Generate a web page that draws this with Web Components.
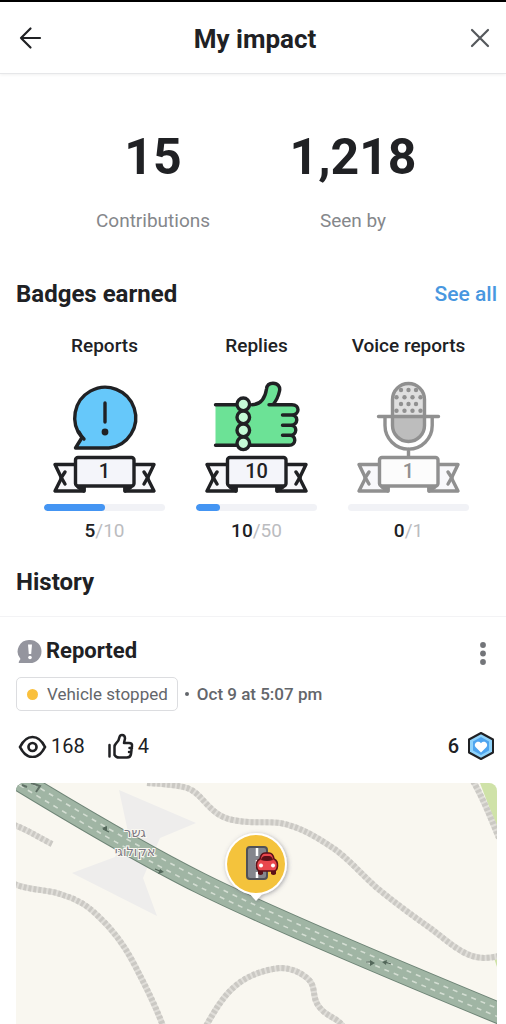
<!DOCTYPE html>
<html lang="en">
<head>
<meta charset="utf-8">
<meta name="viewport" content="width=device-width, initial-scale=1">
<title>My impact</title>
<style>
  body {
    margin: 0;
    background-color: #fff;
    color: #202124;
    font-family: Roboto, "Liberation Sans", sans-serif;
  }
</style>
</head>
<body>
<impact-page></impact-page>

<script>
class PageHeader extends HTMLElement {
  constructor() {
    super();
    this.attachShadow({ mode: "open" });
    this.shadowRoot.innerHTML = `
      <style>
        :host {
          display: block;
          border-top: 2px solid #000;
        }
        header {
          display: flex;
          align-items: center;
          justify-content: space-between;
          height: 71px;
          padding: 0 8px 0 12px;
          border-bottom: 1px solid #e6e7e9;
          box-shadow: 0 1px 3px rgba(0, 0, 0, 0.06);
        }
        h1 {
          margin: 0;
          padding-top: 2px;
          font-size: 26px;
          line-height: 32px;
          font-weight: 700;
        }
        button {
          display: flex;
          padding: 4px;
          border: none;
          background: none;
          cursor: pointer;
        }
        svg {
          width: 28px;
          height: 28px;
          fill: none;
          stroke-width: 2.2;
          stroke-linecap: round;
          stroke-linejoin: round;
        }
      </style>
      <header>
        <button type="button" aria-label="Back">
          <svg viewBox="0 0 28 28" stroke="#202124"><path d="M24 14H5M14.500 4.500 5 14l9.500 9.500"/></svg>
        </button>
        <h1><slot></slot></h1>
        <button type="button" aria-label="Close">
          <svg viewBox="0 0 28 28" stroke="#55585c"><path d="M6 6 22 22M22 6 6 22"/></svg>
        </button>
      </header>
    `;
  }
}
customElements.define("page-header", PageHeader);

class ImpactStat extends HTMLElement {
  constructor() {
    super();
    this.attachShadow({ mode: "open" });
    this.shadowRoot.innerHTML = `
      <style>
        :host {
          display: flex;
          flex-direction: column;
          align-items: center;
          gap: 24px;
        }
        .value {
          font-size: 50px;
          line-height: 56px;
          font-weight: 700;
        }
        .label {
          color: #85878b;
          font-size: 19px;
          line-height: 24px;
        }
      </style>
      <div class="value"><slot></slot></div>
      <div class="label">${this.getAttribute("label")}</div>
    `;
  }
}
customElements.define("impact-stat", ImpactStat);

// pictures that sit above the ribbon, one per badge kind
const badgeArt = {
  reports: `
    <path class="line" fill="#66c8fa" d="M65 72H31.500L38 61.500A30.500 30.500 0 1 1 65 72Z"/>
    <path class="line" fill="none" d="M35 56Q37 60 40 63M61 27V46"/>
    <circle cx="61" cy="56" r="3.400"/>`,
  replies: `
    <path fill="#6ce296" d="M19.500 28.700H50V69.300H19.500Z"/>
    <path class="line" fill="none" d="M19.500 28.700H48M19.500 69.300H48"/>
    <path fill="#6ce296" d="M48 28.700H56C64 28 69 22 70.500 13C71 9 73.500 7.300 77 7.300C82 7.300 84.500 11 83.500 15C82.500 20 80 25 77 28.700H97C104 28.700 104 39 97 39C103 39 102 49.200 97 49.200C101.500 49.200 101 59.300 96 59.300C101 59.300 100 69.300 94 69.300H48Z"/>
    <path class="line" fill="none" d="M48 69.300H93C100.500 69.300 100.500 59.300 94 59.300H86.500M94 59.300C101.500 59.300 101.500 49.200 95 49.200H86.500M95 49.200C102.500 49.200 102.500 39 96 39H86.500M96 39C104 39 104 28.700 96 28.700H73M56 28.700C64 28.500 69 23 70.500 13C71 9 73.500 7.300 77 7.300C82 7.300 84.500 11 83.500 15C82.500 20 80 25 77 28.700"/>
    <g class="line" fill="#c4fad6">
      <circle cx="47.300" cy="28.300" r="6.300"/><circle cx="47.300" cy="41.300" r="6.300"/>
      <circle cx="47.300" cy="54.300" r="6.300"/><circle cx="47.300" cy="67.300" r="6.300"/>
    </g>`,
  voice: `
    <rect x="44.500" y="7.500" width="32" height="58" rx="16" fill="#bdbdbd"/>
    <path fill="#dfdfdf" d="M44.500 40V23.500a16 16 0 0 1 32 0V40Z"/>
    <g>
      <circle cx="53" cy="14" r="2.200"/><circle cx="60.500" cy="14" r="2.200"/><circle cx="68" cy="14" r="2.200"/>
      <circle cx="48.500" cy="21.300" r="2.200"/><circle cx="56.500" cy="21.300" r="2.200"/><circle cx="64.500" cy="21.300" r="2.200"/><circle cx="72.500" cy="21.300" r="2.200"/>
      <circle cx="53" cy="28" r="2.200"/><circle cx="60.500" cy="28" r="2.200"/><circle cx="68" cy="28" r="2.200"/>
      <circle cx="48.500" cy="34.800" r="2.200"/><circle cx="56.500" cy="34.800" r="2.200"/><circle cx="64.500" cy="34.800" r="2.200"/><circle cx="72.500" cy="34.800" r="2.200"/>
    </g>
    <rect class="line" x="44.500" y="7.500" width="32" height="58" rx="16" fill="none"/>
    <path class="line" fill="none" d="M30.500 40.500H90.500M37 40.500V49.500A23.600 23.600 0 0 0 84.200 49.500V40.500M60.500 73V81"/>`
};

class ImpactBadge extends HTMLElement {
  constructor() {
    super();
    this.attachShadow({ mode: "open" });
    const level = this.getAttribute("level");
    const value = Number(this.getAttribute("value"));
    const goal = Number(this.getAttribute("goal"));
    const ink = value > 0 ? "#202124" : "#909090";
    this.shadowRoot.innerHTML = `
      <style>
        :host {
          display: flex;
          flex-direction: column;
          align-items: center;
          min-width: 0;
        }
        h3 {
          margin: 0 0 18px;
          font-size: 19px;
          line-height: 24px;
          font-weight: 500;
          white-space: nowrap;
        }
        svg {
          display: block;
          width: 121px;
          height: 120px;
          margin-bottom: 8px;
        }
        .line {
          stroke: ${ink};
          stroke-width: 3.400;
          stroke-linecap: round;
          stroke-linejoin: round;
        }
        text {
          font-size: 20px;
          font-weight: 500;
          text-anchor: middle;
        }
        .bar {
          width: 100%;
          height: 7px;
          border-radius: 4px;
          background-color: #f1f2f6;
          overflow: hidden;
        }
        .fill {
          width: ${value / goal * 100}%;
          height: 100%;
          border-radius: 4px;
          background-color: #4495f3;
        }
        .count {
          margin-top: 8px;
          color: #bbbcbf;
          font-size: 19px;
          line-height: 24px;
        }
        .count b {
          color: #202124;
          font-weight: 500;
        }
      </style>
      <h3><slot></slot></h3>
      <svg viewBox="0 0 121 120" fill="${ink}" aria-hidden="true">
        ${badgeArt[this.getAttribute("kind")]}
        <g class="line">
          <path fill="#f8f8fb" d="M32 88.500H11L17.500 102 11 115H40V110M89 88.500H110L103.500 102 110 115H81V110"/>
          <path fill="none" d="M17 102 21 96M17 101 21 108M104 102 100 96M104 101 100 108"/>
          <path d="M34 111H40V115ZM87 111H81V115Z"/>
          <rect x="31.500" y="81.500" width="58.500" height="28.500" rx="2.500" fill="${value > 0 ? "#f4f5fa" : "#fcfcfc"}"/>
        </g>
        <text x="60.500" y="102">${level}</text>
      </svg>
      <div class="bar"><div class="fill"></div></div>
      <div class="count"><b>${value}</b>/${goal}</div>
    `;
  }
}
customElements.define("impact-badge", ImpactBadge);

class ReportMap extends HTMLElement {
  constructor() {
    super();
    this.attachShadow({ mode: "open" });
    this.shadowRoot.innerHTML = `
      <style>
        :host {
          display: block;
          border-radius: 8px 8px 0 0;
          background-color: #f9f7f0;
          overflow: hidden;
        }
        svg {
          display: block;
          width: 100%;
          height: auto;
        }
        .name {
          fill: #7d7883;
          stroke: #f9f7f0;
          stroke-width: 2;
          paint-order: stroke;
          font-family: "DejaVu Sans", "Liberation Sans", sans-serif;
          font-size: 13px;
          text-anchor: middle;
        }
      </style>
      <svg viewBox="0 0 481 241" fill="none">
        <defs>
          <path id="road" d="M-12 -12C60 32 130 73 184 100S330 167 490 233"/>
          <path id="tracks" d="M131 0C150 1 161 2 171 5C187 10 193 33 217 37C235 41 250 38 264 40C285 44 302 55 317 65C332 75 345 91 361 105C378 119 397 133 414 145C425 153 436 163 447 169C460 176 470 176 483 173M-2 42C10 46 22 54 36 61M-2 101C15 108 32 106 47 112C60 116 71 122 81 132C95 145 107 160 117 179C129 202 138 219 147 243M190 243C198 229 206 215 217 205C231 192 248 187 264 185C276 185 285 190 291 195C302 204 294 215 305 226C312 234 320 234 327 243M457 -2C468 17 475 36 483 55"/>
          <filter id="shade" x="-30%" y="-30%" width="160%" height="160%">
            <feDropShadow dx="1" dy="1" stdDeviation="2" flood-color="#555566" flood-opacity="0.5"/>
          </filter>
        </defs>
        <path fill="#cfe2a8" d="M464 0H481V45ZM478 175 481 173V184Z"/>
        <path fill="#eeedec" d="M103 7 180 40 144 55 127 95 141 133 56 90 99 74 112 49Z"/>
        <use href="#tracks" stroke="#e0ded9" stroke-width="6"/>
        <use href="#tracks" stroke="#cbc9c4" stroke-width="6" stroke-dasharray="3 2"/>

        <use href="#road" stroke="#6f8577" stroke-width="22"/>
        <use href="#road" stroke="#a0b5a4" stroke-width="20"/>
        <g stroke="#d3ddd2" stroke-width="1.600" stroke-dasharray="5 5">
          <path d="M-10 -15.500C62 28.500 132 69.500 185.500 96.500S331.500 163.500 491.500 229.500"/>
          <path d="M-14 -8.500C58 35.500 128 76.500 182.500 103.500S328.500 170.500 488.500 236.500"/>
        </g>
        <g stroke="#53675a" stroke-width="1.200">
          <path d="M93 49 87 46M139 86 146 89M350 179H356M369 179 375 181"/>
        </g>
        <path fill="#53675a" d="M86 45 91 43V48ZM148 89 142 91 144 86ZM359 180 354 183V177ZM366 179 371 177 370 182Z"/>
        <path stroke="#5f7065" stroke-width="2" d="M6 2 11 4M15 0 24 3 20 9"/>

        <text class="name" x="119" y="54">גשר</text>
        <text class="name" x="119" y="73">אקולוגי</text>

        <g filter="url(#shade)">
          <path fill="#fff" d="M232 109 240 118 248 109Z"/>
          <circle cx="240" cy="81" r="31" fill="#fff"/>
        </g>
        <circle cx="240" cy="81" r="29" fill="#f4c33c"/>
        <rect x="231" y="64" width="20" height="32" rx="3" fill="#84868d" stroke="#505157" stroke-width="2"/>
        <path stroke="#fff" stroke-width="2.500" d="M241 65V73M241 77V84M241 89V95"/>
        <path fill="#5c1118" d="M242 86H247V91Q244.500 93 242 91ZM255 86H260V91Q257.500 93 255 91Z"/>
        <path fill="#e9474d" stroke="#5c1118" stroke-width="1.600" d="M244 76Q245 70 249 70H253Q257 70 258 76Q262 78 261.500 83Q261 88 258 88H244Q241 88 240.500 83Q240 78 244 76Z"/>
        <path fill="#5c1118" d="M245 77Q246 73 249 73H253Q256 73 257 77Q251 79 245 77Z"/>
        <circle cx="245" cy="82.500" r="2" fill="#fff"/>
        <circle cx="257" cy="82.500" r="2" fill="#fff"/>
      </svg>
    `;
  }
}
customElements.define("report-map", ReportMap);

class HistoryEntry extends HTMLElement {
  constructor() {
    super();
    this.attachShadow({ mode: "open" });
    this.shadowRoot.innerHTML = `
      <style>
        :host {
          display: block;
          padding: 18px 9px 0 16px;
          border-top: 1px solid #f3f3f5;
        }
        div, span {
          display: flex;
          align-items: center;
        }
        .top {
          justify-content: space-between;
          height: 32px;
        }
        .title {
          gap: 4px;
          padding-left: 1px;
        }
        h3 {
          margin: 0;
          font-size: 22px;
          line-height: 28px;
          font-weight: 700;
        }
        button {
          display: flex;
          padding: 6px 8px 0;
          border: none;
          background: none;
          cursor: pointer;
        }
        .meta {
          gap: 7px;
          margin-top: 10px;
          color: #63666b;
          font-size: 17px;
          line-height: 24px;
        }
        .chip {
          gap: 9px;
          padding: 4px 9px 4px 10px;
          border: 1px solid #dcdde0;
          border-radius: 5px;
        }
        .dot {
          width: 11px;
          height: 11px;
          border-radius: 50%;
          background-color: #fac03c;
        }
        .bullet {
          width: 4px;
          height: 4px;
          border-radius: 50%;
          background-color: #63666b;
        }
        time {
          padding-left: 1px;
          font-weight: 500;
        }
        .numbers {
          justify-content: space-between;
          margin: 20px 0 22px;
          padding: 0 2px;
          font-size: 20px;
          line-height: 30px;
        }
        .reactions {
          gap: 22px;
        }
        .reactions span {
          gap: 4px;
        }
        .points {
          gap: 8px;
          font-weight: 500;
        }
      </style>
      <div class="top">
        <div class="title">
          <svg width="25" height="25" viewBox="0 0 25 25" aria-hidden="true">
            <path fill="#94959e" d="M13 1A11.500 11.500 0 1 1 13 24H2Q1 23 3.500 20A11.500 11.500 0 0 1 13 1Z"/>
            <path fill="#fff" d="M11 5.500H15L14.200 15H11.800Z"/>
            <circle cx="13" cy="18.500" r="1.800" fill="#fff"/>
          </svg>
          <h3>${this.getAttribute("heading")}</h3>
        </div>
        <button type="button" aria-label="More options">
          <svg width="12" height="28" viewBox="0 0 12 28" fill="#737579">
            <circle cx="6" cy="5" r="2.900"/><circle cx="6" cy="13.500" r="2.900"/><circle cx="6" cy="22" r="2.900"/>
          </svg>
        </button>
      </div>
      <div class="meta">
        <div class="chip"><span class="dot"></span>${this.getAttribute("kind")}</div>
        <span class="bullet"></span>
        <time>${this.getAttribute("time")}</time>
      </div>
      <div class="numbers">
        <div class="reactions">
          <span>
            <svg width="29" height="24" viewBox="0 0 29 24" fill="none" stroke="#202124" stroke-width="2.700" aria-hidden="true">
              <path d="M2 13Q7 3 14.500 3T27 13Q22 23 14.500 23T2 13Z"/>
              <circle cx="14.500" cy="13" r="4"/>
            </svg>
            ${this.getAttribute("views")}
          </span>
          <span>
            <svg width="27" height="26" viewBox="0 0 27 26" fill="none" stroke="#202124" stroke-width="2.500" stroke-linecap="round" stroke-linejoin="round" aria-hidden="true">
              <path d="M2.500 12V23.500M7.500 22V14Q7.500 12 9 10.500Q12 8 12.500 4Q13 2 15 2Q18 2 18 5.500L17 10H22Q25.500 10 25 13L24 21Q23.500 24.500 20 24.500H12Q9 24.500 7.500 22M22.500 15H25M22 19H24"/>
            </svg>
            ${this.getAttribute("likes")}
          </span>
        </div>
        <div class="points">
          ${this.getAttribute("points")}
          <svg width="28" height="30" viewBox="0 0 28 30" aria-hidden="true">
            <path fill="#8fd3fb" stroke="#202124" stroke-width="2" stroke-linejoin="round" d="M14 2 26 8.500V21.500L14 28 2 21.500V8.500Z"/>
            <path fill="#4fa5ef" d="M14 6 22 10.500V19.500L14 24 6 19.500V10.500Z"/>
            <path fill="#fff" d="M14 21.500 8.500 16C6 12.500 11 8.500 14 12.200C17 8.500 22 12.500 19.500 16Z"/>
          </svg>
        </div>
      </div>
      <slot></slot>
    `;
  }
}
customElements.define("history-entry", HistoryEntry);

class ImpactPage extends HTMLElement {
  constructor() {
    super();
    this.attachShadow({ mode: "open" });
    this.shadowRoot.innerHTML = `
      <style>
        :host {
          display: block;
        }
        .stats {
          display: grid;
          grid-template-columns: 1fr 1fr;
          padding: 55px 53px 46px;
        }
        .heading {
          display: flex;
          align-items: center;
          justify-content: space-between;
          padding: 0 9px 0 16px;
        }
        h2 {
          margin: 0;
          font-size: 24px;
          line-height: 30px;
          font-weight: 700;
        }
        a {
          color: #4897e0;
          font-size: 21px;
          line-height: 24px;
          font-weight: 500;
          text-decoration: none;
        }
        .badges {
          display: grid;
          grid-template-columns: repeat(3, 1fr);
          gap: 31px;
          padding: 25px 37px 24px 44px;
        }
        .history {
          padding-bottom: 19px;
        }
      </style>
      <page-header>My impact</page-header>
      <main>
        <section class="stats">
          <impact-stat label="Contributions">15</impact-stat>
          <impact-stat label="Seen by">1,218</impact-stat>
        </section>
        <section>
          <div class="heading">
            <h2>Badges earned</h2>
            <a href="#badges">See all</a>
          </div>
          <div class="badges">
            <impact-badge kind="reports" level="1" value="5" goal="10">Reports</impact-badge>
            <impact-badge kind="replies" level="10" value="10" goal="50">Replies</impact-badge>
            <impact-badge kind="voice" level="1" value="0" goal="1">Voice reports</impact-badge>
          </div>
        </section>
        <section>
          <div class="heading history">
            <h2>History</h2>
          </div>
          <history-entry heading="Reported" kind="Vehicle stopped" time="Oct 9 at 5:07 pm" views="168" likes="4" points="6">
            <report-map></report-map>
          </history-entry>
        </section>
      </main>
    `;
  }
}
customElements.define("impact-page", ImpactPage);
</script>
</body>
</html>
